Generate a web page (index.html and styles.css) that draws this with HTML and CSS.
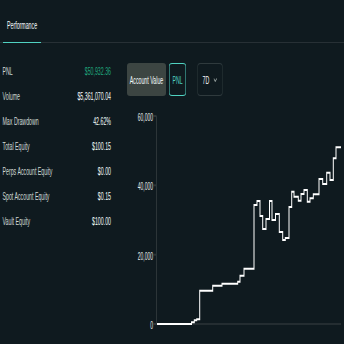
FILE: index.html
```html
<!DOCTYPE html>
<html lang="en">
<head>
<meta charset="utf-8">
<title>Performance</title>
<link rel="stylesheet" href="styles.css">
</head>
<body>
<div class="viewport">
<div class="page">
  <div class="tabs">
    <div class="tab active">Performance</div>
  </div>
  <div class="main">
    <div class="stats">
      <div class="row"><span class="label">PNL</span><span class="value pos">$50,932.36</span></div>
      <div class="row"><span class="label">Volume</span><span class="value">$5,361,070.04</span></div>
      <div class="row"><span class="label">Max Drawdown</span><span class="value">42.62%</span></div>
      <div class="row"><span class="label">Total Equity</span><span class="value">$100.15</span></div>
      <div class="row"><span class="label">Perps Account Equity</span><span class="value">$0.00</span></div>
      <div class="row"><span class="label">Spot Account Equity</span><span class="value">$0.15</span></div>
      <div class="row"><span class="label">Vault Equity</span><span class="value">$100.00</span></div>
    </div>
    <div class="chartcol">
      <div class="controls">
        <button class="btn btn-selected">Account Value</button>
        <button class="btn btn-active">PNL</button>
        <button class="btn btn-range">7D<svg class="chev" width="7" height="4" viewBox="0 0 7 4"><polyline points="0.5,0.5 3.5,3.5 6.5,0.5" fill="none" stroke="#949e9c" stroke-width="1.2"/></svg></button>
      </div>
      <svg class="chart" width="434" height="248" viewBox="254 96 434 248">
        <g class="axis">
          <line x1="313" y1="116" x2="313" y2="324.5"/>
          <line x1="313" y1="324" x2="682" y2="324" class="xaxis"/>
          <line x1="307" y1="116" x2="313" y2="116"/>
          <line x1="307" y1="185.3" x2="313" y2="185.3"/>
          <line x1="307" y1="254.7" x2="313" y2="254.7"/>
          <line x1="307" y1="324" x2="313" y2="324"/>
        </g>
        <g class="ticks">
          <text x="306" y="117.8">60,000</text>
          <text x="306" y="187.1">40,000</text>
          <text x="306" y="256.5">20,000</text>
          <text x="306" y="325.8">0</text>
        </g>
        <path class="line" d="M314,324 H383 V322.3 H388.6 V320.3 H393.4 V319.3 H399.4 V290.7 H425.4 V285.7 H444 V283.7 H475.4 V281.7 H480 V275.7 H488 V268.7 H508 V205 H514 V201 H520 V216 H525.4 V229 H532 V219 H539 V201 H544 V220 H551 V214 H558.6 V232 H565.4 V240 H570.6 V238 H578 V207 H583.4 V191.7 H588 V196.7 H596.6 V200.7 H602 V194 H608 V190 H614.6 V201.7 H620 V198.3 H626.6 V194.3 H638 V179 H645.4 V184 H653.4 V172.7 H660 V180 H666.6 V158.3 H672 V147.3 H682"/>
      </svg>
    </div>
  </div>
</div>
</div>
</body>
</html>
```

FILE: styles.css
```css
html, body {
  margin: 0;
  padding: 0;
  overflow: hidden;
  background: #0f1a1f;
}

body {
  font-family: "Liberation Sans", Arial, sans-serif;
  font-size: 10.5px;
  color: #f6fefd;
}

.viewport {
  width: 344px;
  height: 344px;
  overflow: hidden;
  contain: paint;
}

.page {
  width: 688px;
  height: 344px;
  transform: scaleX(0.5);
  transform-origin: 0 0;
}

.tabs {
  display: flex;
  height: 42px;
  padding-left: 6px;
  border-bottom: 1px solid #273035;
}

.tab {
  padding: 18px 8px 0;
  line-height: 14px;
  color: #f6fefd;
  border-bottom: 1px solid transparent;
  margin-bottom: -1px;
}

.tab.active {
  border-bottom-color: #50d2c1;
}

.main {
  display: flex;
  gap: 32px;
}

.stats {
  width: 222px;
  box-sizing: border-box;
  padding: 15px 0 0 5px;
}

.row {
  display: flex;
  justify-content: space-between;
  align-items: center;
  height: 25px;
}

.label {
  color: #d2dad7;
}

.value {
  color: #f6fefd;
}

.value.pos {
  color: #1fa67d;
}

.chartcol {
  width: 434px;
  padding-top: 20px;
}

.controls {
  display: flex;
  gap: 6px;
  height: 33px;
}

.btn {
  display: flex;
  align-items: center;
  justify-content: center;
  height: 33px;
  box-sizing: border-box;
  padding: 0;
  margin: 0;
  font: inherit;
  border: 1px solid transparent;
  border-radius: 6px / 3px;
  background: transparent;
  color: #f6fefd;
}

.btn-selected {
  width: 78px;
  background: #3c4542;
}

.btn-active {
  width: 34px;
  border-color: #50d2c1;
  color: #50d2c1;
}

.btn-range {
  width: 50px;
  margin-left: 17px;
  justify-content: flex-start;
  padding-left: 9px;
  border-color: #2f3a3d;
}

.chev {
  margin-left: 9px;
  display: block;
}

.chart {
  display: block;
}

.axis line {
  stroke: #2c3538;
  stroke-width: 2;
}

.axis .xaxis {
  stroke-width: 1.5;
}

.ticks text {
  fill: #e6ebea;
  font-family: "Liberation Sans", Arial, sans-serif;
  font-size: 10px;
  text-anchor: end;
  dominant-baseline: central;
}

.line {
  fill: none;
  stroke: #ffffff;
  stroke-width: 2;
  stroke-linejoin: miter;
}
```
